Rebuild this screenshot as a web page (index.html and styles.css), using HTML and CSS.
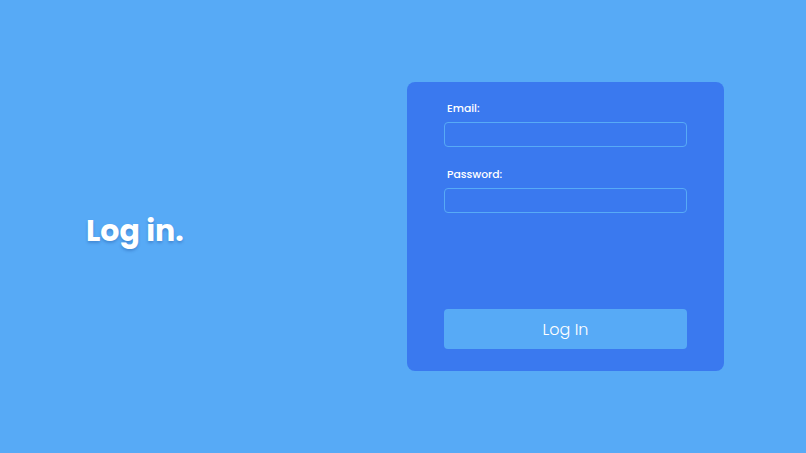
FILE: index.html
```html
<!DOCTYPE html>
<html>
<head>
<meta charset="utf-8">
<link rel="stylesheet" href="styles.css">
</head>
<body>
<main class="page">
  <h1 class="title">Log in.</h1>
  <form class="card">
    <label class="label" for="email">Email:</label>
    <input class="input" id="email" type="email">
    <label class="label label-second" for="password">Password:</label>
    <input class="input" id="password" type="password">
    <button class="btn" type="button">Log In</button>
  </form>
</main>
</body>
</html>
```
FILE: styles.css
```css
html, body {
  margin: 0;
  padding: 0;
  height: 100%;
}
body {
  background: #57aaf6;
  font-family: "Poppins", "Inter", "Lato", "Noto Sans", sans-serif;
  color: #fff;
}
.page {
  height: 100vh;
  display: flex;
  align-items: center;
  padding: 0 82px 0 86px;
  box-sizing: border-box;
}
.title {
  margin: 8px 0 0;
  font-size: 30px;
  font-weight: 700;
  text-shadow: 0 2px 3px rgba(0, 40, 120, 0.25);
}
.card {
  margin-left: auto;
  width: 317px;
  height: 289px;
  box-sizing: border-box;
  background: #3a79ef;
  border-radius: 8px;
  padding: 19px 37px 22px;
  display: flex;
  flex-direction: column;
}
.label {
  display: block;
  font-size: 10.8px;
  line-height: 15px;
  font-weight: 500;
  padding-left: 3px;
  margin-bottom: 6px;
}
.label-second {
  margin-top: 20px;
}
.input {
  height: 25px;
  box-sizing: border-box;
  border: 1.5px solid #57aaf6;
  border-radius: 4px;
  background: transparent;
  margin: 0;
  outline: none;
}
.btn {
  margin-top: auto;
  height: 40px;
  border: none;
  border-radius: 4px;
  background: #57aaf6;
  color: #fff;
  font-family: inherit;
  font-size: 16px;
  font-weight: 300;
}
```
